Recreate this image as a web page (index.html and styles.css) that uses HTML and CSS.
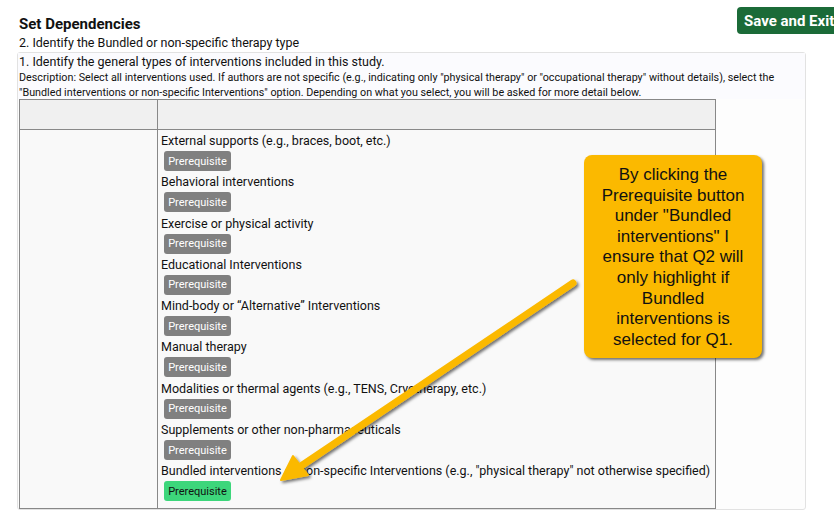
FILE: index.html
```html
<!DOCTYPE html>
<html>
<head>
<meta charset="utf-8">
<link rel="stylesheet" href="styles.css">
</head>
<body>
<div class="page">
  <div class="top">
    <div class="heading">
      <div class="title">Set Dependencies</div>
      <div class="subtitle">2. Identify the Bundled or non-specific therapy type</div>
    </div>
    <button class="save">Save and Exit</button>
  </div>
  <div class="panel">
    <div class="question">
      <div class="qtitle">1. Identify the general types of interventions included in this study.</div>
      <div class="desc">Description: Select all interventions used. If authors are not specific (e.g., indicating only "physical therapy" or "occupational therapy" without details), select the "Bundled interventions or non-specific Interventions" option. Depending on what you select, you will be asked for more detail below.</div>
    </div>
    <table class="grid">
      <tr class="head"><th class="c1"></th><th class="c2"></th></tr>
      <tr class="body">
        <td class="c1"></td>
        <td class="c2">
          <div class="opt">External supports (e.g., braces, boot, etc.)</div>
          <button class="pre">Prerequisite</button>
          <div class="opt">Behavioral interventions</div>
          <button class="pre">Prerequisite</button>
          <div class="opt">Exercise or physical activity</div>
          <button class="pre">Prerequisite</button>
          <div class="opt">Educational Interventions</div>
          <button class="pre">Prerequisite</button>
          <div class="opt">Mind-body or “Alternative” Interventions</div>
          <button class="pre">Prerequisite</button>
          <div class="opt">Manual therapy</div>
          <button class="pre">Prerequisite</button>
          <div class="opt">Modalities or thermal agents (e.g., TENS, Cryotherapy, etc.)</div>
          <button class="pre">Prerequisite</button>
          <div class="opt">Supplements or other non-pharmaceuticals</div>
          <button class="pre">Prerequisite</button>
          <div class="opt">Bundled interventions or non-specific Interventions (e.g., "physical therapy" not otherwise specified)</div>
          <button class="pre on">Prerequisite</button>
        </td>
      </tr>
    </table>
  </div>
</div>
<svg class="arrow" width="834" height="524" viewBox="0 0 834 524">
  <defs>
    <filter id="sh" x="-20%" y="-20%" width="140%" height="140%">
      <feDropShadow dx="2" dy="2" stdDeviation="1.5" flood-color="#000" flood-opacity="0.55"/>
    </filter>
  </defs>
  <g filter="url(#sh)">
    <line x1="573" y1="283" x2="298" y2="468" stroke="#fbb900" stroke-width="7" stroke-linecap="round"/>
    <polygon points="281,480 308,475 293,456" fill="#fbb900" stroke="#fbb900" stroke-width="2" stroke-linejoin="round"/>
  </g>
</svg>
<div class="callout">By clicking the Prerequisite button under "Bundled interventions" I ensure that Q2 will only highlight if Bundled interventions is selected for Q1.</div>
</body>
</html>
```
FILE: styles.css
```css
html, body {
  margin: 0;
  padding: 0;
  background: #ffffff;
  font-family: Roboto, "Liberation Sans", sans-serif;
  color: #111;
}
.page {
  padding: 0 0 0 17px;
  width: 817px;
  overflow: hidden;
}
.top {
  display: flex;
  justify-content: space-between;
  align-items: flex-start;
}
.heading {
  padding: 15px 0 0 2px;
}
.title {
  font-size: 15px;
  font-weight: bold;
  line-height: 19px;
}
.subtitle {
  font-size: 12.5px;
  line-height: 18px;
}
.save {
  margin-top: 7px;
  margin-right: -20px;
  width: 117px;
  height: 27px;
  background: #1b6b38;
  color: #fff;
  border: none;
  border-radius: 4px;
  font-family: Roboto, "Liberation Sans", sans-serif;
  font-size: 15px;
  font-weight: bold;
  text-align: left;
  padding: 0 0 0 7px;
  white-space: nowrap;
}
.panel {
  width: 787px;
  border: 1px solid #e2e2e2;
  border-radius: 3px;
  background: #fdfdfd;
}
.question {
  background: #fbfbfe;
  padding: 1px 0 0 1px;
  height: 45px;
}
.qtitle {
  font-size: 12.5px;
  line-height: 15px;
}
.desc {
  margin-top: 1px;
  font-size: 10.75px;
  line-height: 15px;
}
.grid {
  display: table;
  border-collapse: collapse;
  margin-left: 1px;
  width: 697px;
}
.grid th, .grid td {
  border: 1px solid #888;
  padding: 0;
  vertical-align: top;
}
.head th {
  background: #f0f0f0;
  height: 29px;
}
.body td {
  background: #f9f9f9;
}
.c1 {
  width: 137px;
}
.body .c2 {
  padding: 1px 0 5px 3px;
}
.opt {
  font-size: 12.5px;
  line-height: 19px;
  white-space: nowrap;
}
.pre {
  display: block;
  margin: 1px 0 1.3px 3px;
  height: 20px;
  width: 67px;
  padding: 0;
  border: none;
  border-radius: 3px;
  background: #808080;
  color: #fff;
  font-family: Roboto, "Liberation Sans", sans-serif;
  font-size: 11px;
}
.pre.on {
  background: #3dd67b;
  color: #111;
}
.arrow {
  position: absolute;
  left: 0;
  top: 0;
  pointer-events: none;
}
.callout {
  position: absolute;
  left: 584px;
  top: 155px;
  width: 178px;
  height: 203px;
  box-sizing: border-box;
  padding: 10px 10px 0;
  background: #fbb900;
  border-radius: 8px;
  box-shadow: 2px 2px 3px rgba(0,0,0,0.55);
  font-family: "Liberation Sans", Arial, sans-serif;
  font-size: 17px;
  line-height: 20.6px;
  text-align: center;
  color: #111;
}
```
